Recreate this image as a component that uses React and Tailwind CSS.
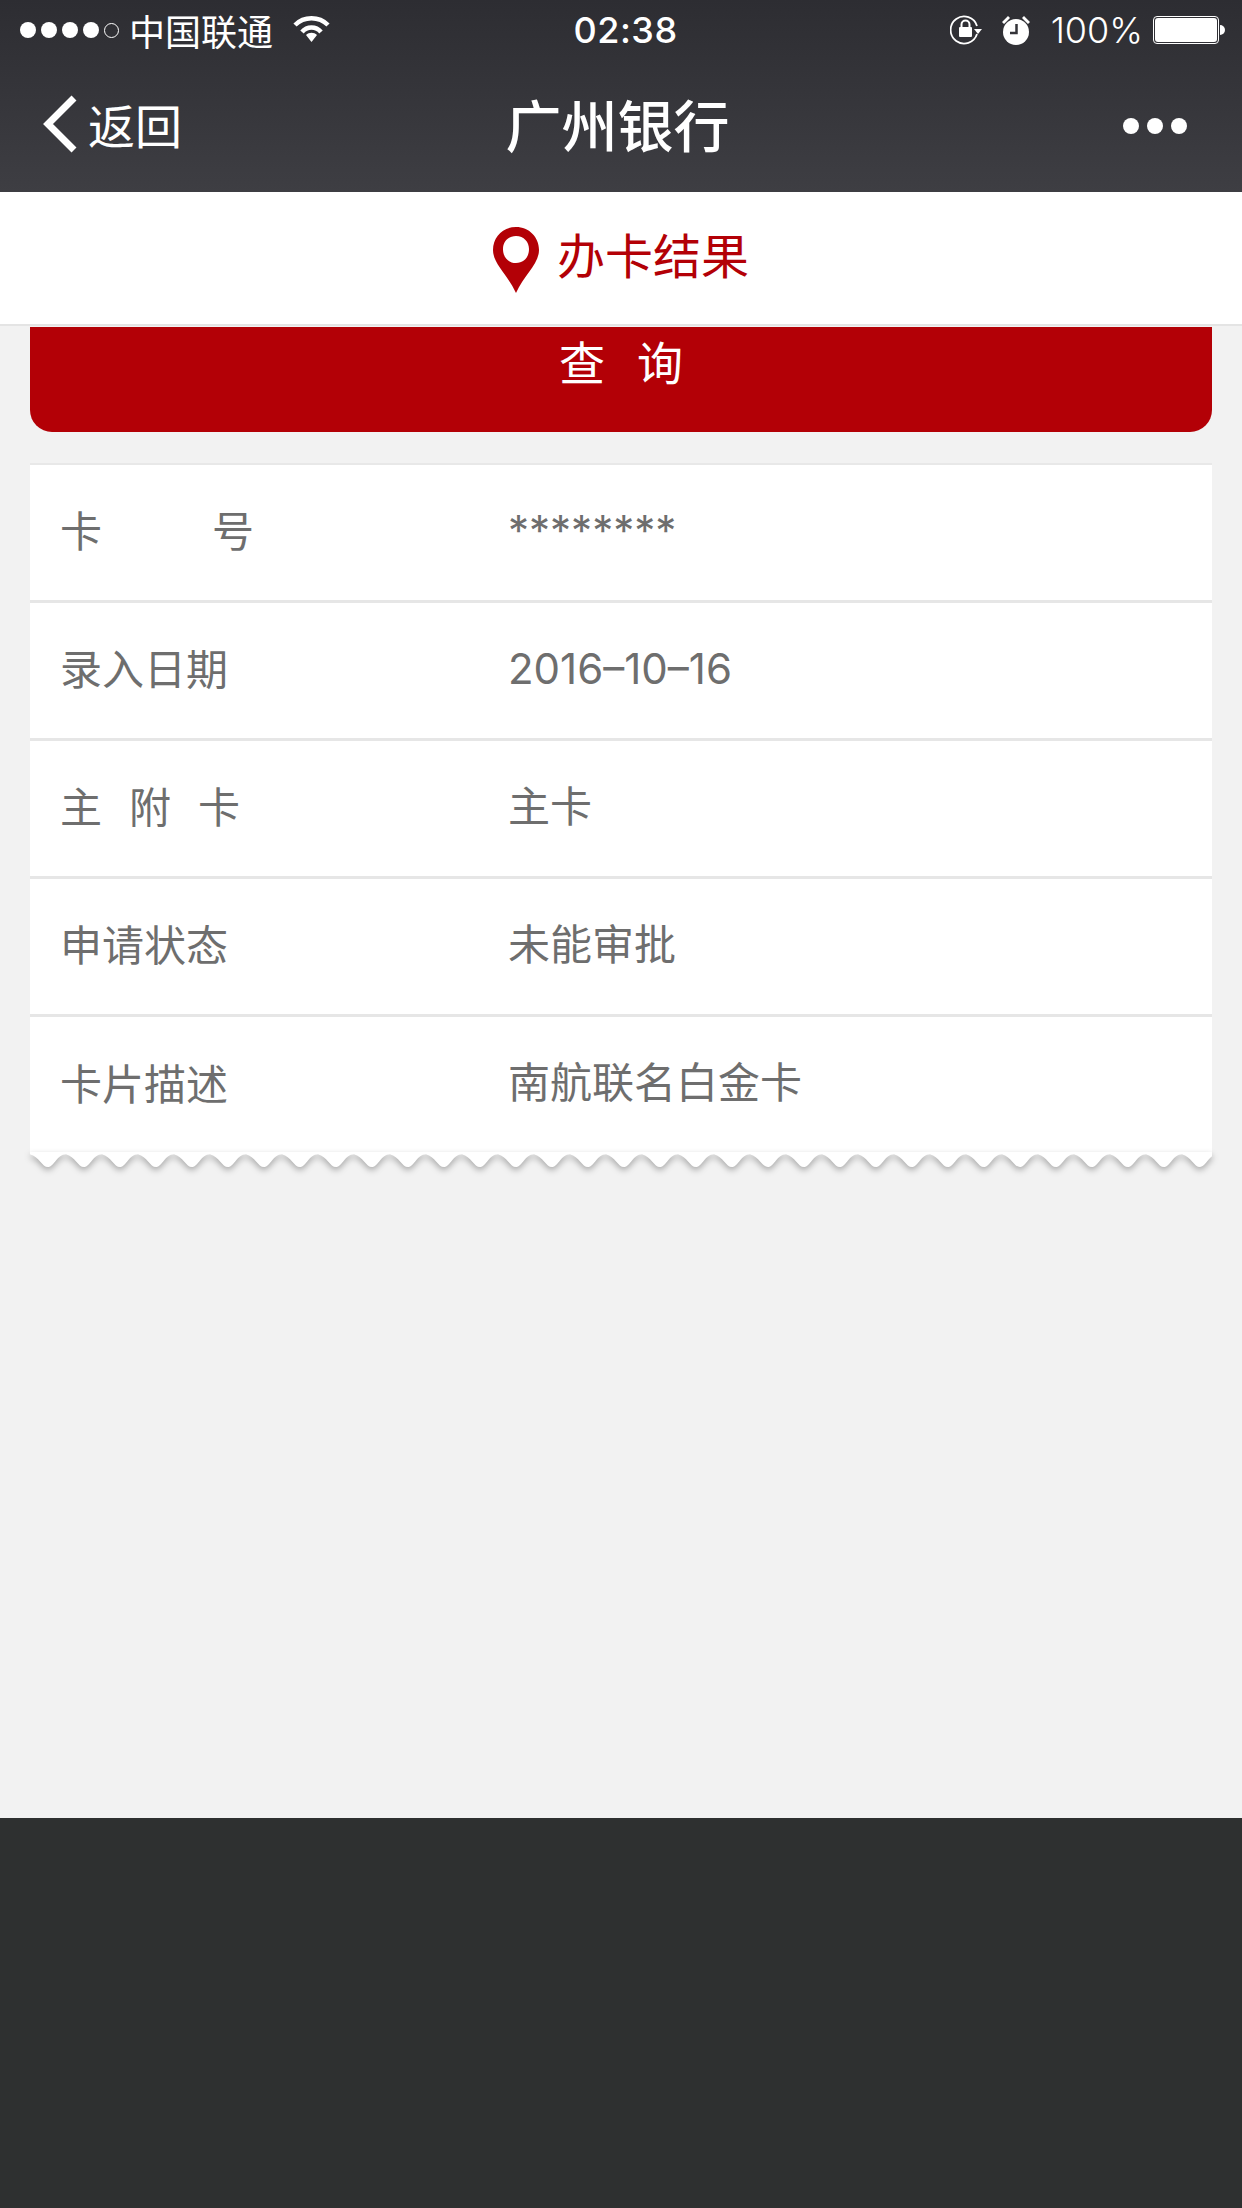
const rows = [
  { label: ['卡', '号'], labelWidth: 'w-[194px]', value: '********' },
  { label: ['录入日期'], labelWidth: 'w-[168px]', value: '2016–10–16' },
  { label: ['主', '附', '卡'], labelWidth: 'w-[180px]', value: '主卡' },
  { label: ['申请状态'], labelWidth: 'w-[168px]', value: '未能审批' },
  { label: ['卡片描述'], labelWidth: 'w-[168px]', value: '南航联名白金卡' }
]

// zigzag at the bottom of the receipt card
const wavePeriod = 36
const waveCount = 33
let wavePath = 'M0 0 L0 2'
for (let i = 0; i < waveCount; i++) {
  const x = i * wavePeriod
  wavePath += ` C${x + 9} 4 ${x + 12} 14 ${x + 18} 14 C${x + 24} 14 ${x + 27} 2 ${x + 36} 2`
}
wavePath += ` L${wavePeriod * waveCount} 0 Z`

const Wifi = () => (
  <svg width="37" height="30" viewBox="0 0 37 30" fill="none" stroke="white" strokeWidth="4.5">
    <path d="M2 10 C11 1 26 1 35 10" />
    <path d="M9 17 C14 11 23 11 28 17" />
    <path d="M13 20 L18.5 27 L24 20 C21 17 16 17 13 20 Z" fill="white" stroke="none" />
  </svg>
)

const RotationLock = () => (
  <svg width="33" height="32" viewBox="0 0 33 32" fill="none" stroke="white">
    <path d="M27 20 A13.5 13.5 0 1 1 27 12" strokeWidth="1.8" />
    <path d="M24 15 L32 15 L28 20 Z" fill="white" stroke="none" />
    <rect x="9" y="13" width="13" height="10" rx="1" fill="white" stroke="none" />
    <path d="M11.5 13 V10.5 A4 4 0 0 1 19.5 10.5 V13" strokeWidth="2" />
  </svg>
)

const Alarm = () => (
  <svg width="32" height="32" viewBox="0 0 32 32">
    <circle cx="16" cy="18" r="13" fill="white" />
    <path d="M2 8 L8 2 L10 4 L4 10 Z M30 8 L24 2 L22 4 L28 10 Z" fill="white" />
    <path d="M16.5 10 V19 H10" fill="none" stroke="#333338" strokeWidth="2.5" />
  </svg>
)

const Pin = () => (
  <svg width="46" height="66" viewBox="0 0 46 66">
    <path
      fillRule="evenodd"
      d="M23 0 C36 0 46 10 46 23 C46 37 31 48 23 66 C15 48 0 37 0 23 C0 10 10 0 23 0 Z M23 9 C15 9 10 15 10 22 C10 30 15 36 23 36 C31 36 36 30 36 22 C36 15 31 9 23 9 Z"
      fill="#b30006"
    />
  </svg>
)

const App = () => {
  return (
    <div className="w-[1242px] h-[2208px] flex flex-col bg-[#2e3030] font-['Noto_Sans_CJK_SC','Noto_Sans',sans-serif] overflow-hidden">
      {/* Status + nav bar */}
      <header className="h-[192px] shrink-0 bg-gradient-to-b from-[#2d2d32] to-[#3e3e43] text-white">
        <div className="h-[60px] flex items-center pl-[20px] pr-[17px]">
          <div className="flex-1 flex items-center">
            <div className="flex items-center gap-[5px]">
              <span className="w-[16px] h-[16px] rounded-full bg-white" />
              <span className="w-[16px] h-[16px] rounded-full bg-white" />
              <span className="w-[16px] h-[16px] rounded-full bg-white" />
              <span className="w-[16px] h-[16px] rounded-full bg-white" />
              <span className="w-[15px] h-[15px] rounded-full border border-white" />
            </div>
            <span className="ml-[10px] text-[36px] leading-none">中国联通</span>
            <span className="ml-[20px] flex"><Wifi /></span>
          </div>
          <span className="ml-[6px] font-['Inter',sans-serif] text-[36px] leading-none font-medium tracking-[0.5px]">02:38</span>
          <div className="flex-1 flex items-center justify-end">
            <RotationLock />
            <span className="ml-[17px] flex"><Alarm /></span>
            <span className="ml-[19px] font-['Inter',sans-serif] text-[36px] leading-none font-light">100%</span>
            <div className="ml-[10px] w-[66px] h-[28px] rounded-[4px] border border-white p-[1px]">
              <div className="w-full h-full rounded-[3px] bg-white" />
            </div>
            <span className="ml-[1px] w-[5px] h-[10px] rounded-r-full bg-white" />
          </div>
        </div>
        <div className="h-[132px] flex items-center pl-[42px] pr-[55px] pb-[6px]">
          <div className="flex-1 flex items-center">
            <svg className="mt-[2px]" width="36" height="58" viewBox="0 0 36 58" fill="none" stroke="white" strokeWidth="7">
              <path d="M32 3 L6 29 L32 55" />
            </svg>
            <span className="ml-[10px] text-[47px] leading-none">返回</span>
          </div>
          <h1 className="text-[56px] leading-none font-medium pl-[6px]">广州银行</h1>
          <div className="flex-1 flex items-center justify-end gap-[8px] mt-[5px]">
            <span className="w-[16px] h-[16px] rounded-full bg-white" />
            <span className="w-[16px] h-[16px] rounded-full bg-white" />
            <span className="w-[16px] h-[16px] rounded-full bg-white" />
          </div>
        </div>
      </header>

      {/* Main Content */}
      <main className="h-[1626px] shrink-0 bg-[#f2f2f2]">
        <div className="h-[134px] bg-white border-b-[2px] border-[#e4e4e4] flex items-center justify-center gap-[18px]">
          <span className="flex mt-[4px]"><Pin /></span>
          <span className="text-[48px] leading-none text-[#b30006] mb-[10px]">办卡结果</span>
        </div>

        <div className="mt-[1px] mx-[30px] h-[105px] bg-[#b30006] rounded-b-[22px] pt-[8px] flex justify-center text-white text-[46px] leading-[50px] gap-[32px]">
          <span>查</span>
          <span>询</span>
        </div>

        <section className="mt-[31px] mx-[30px] border-t-[2px] border-[#e8e8e8]">
          {rows.map((row, index) => (
            <div
              key={row.value}
              className={
                index === rows.length - 1
                  ? 'h-[135px] bg-white flex items-center text-[42px] leading-none text-[#6e6e6e] pb-[3px]'
                  : 'h-[138px] bg-white border-b-[3px] border-[#e6e6e6] flex items-center text-[42px] leading-none text-[#6e6e6e] pb-[4px]'
              }
            >
              <div className="w-[478px] pl-[30px]">
                <div className={`${row.labelWidth} flex justify-between mb-[3px]`}>
                  {row.label.map((part) => (
                    <span key={part}>{part}</span>
                  ))}
                </div>
              </div>
              <span className="font-['Inter','Noto_Sans_CJK_SC',sans-serif]">{row.value}</span>
            </div>
          ))}
          <svg className="block w-[1182px] h-[15px] drop-shadow-[0_3px_3px_rgba(0,0,0,0.3)]" viewBox="0 0 1182 14" preserveAspectRatio="none">
            <path d={wavePath} fill="white" />
          </svg>
        </section>
      </main>
    </div>
  )
}

export default App
